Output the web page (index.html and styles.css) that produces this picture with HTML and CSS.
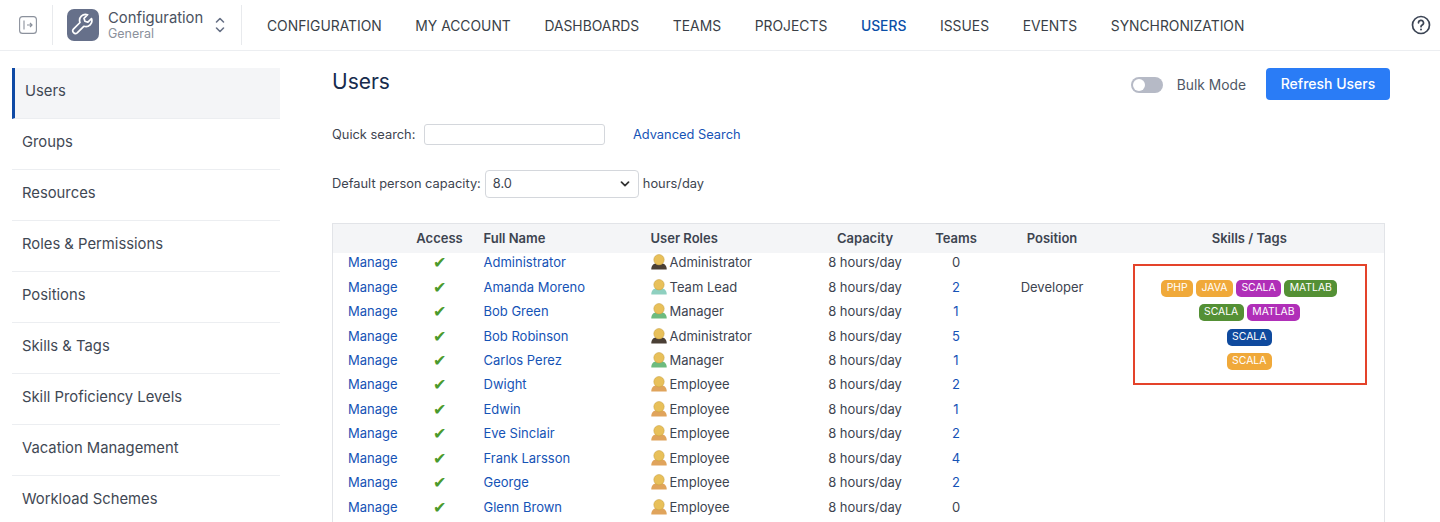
FILE: index.html
```html
<!DOCTYPE html>
<html lang="en">
<head>
<meta charset="utf-8">
<title>Users</title>
<link rel="stylesheet" href="styles.css">
</head>
<body>
<svg class="defs" width="0" height="0" aria-hidden="true">
  <symbol id="user" viewBox="0 0 16 16">
    <path d="M.3 15.600c0-1 0-2.200.5-3.200.8-1.700 2.500-2.800 3.700-2.800h7c1.200 0 2.900 1.100 3.700 2.800.5 1 .5 2.200.5 3.200z" fill="currentColor"/>
    <circle cx="8" cy="5.700" r="5.200" fill="#e8c05a" stroke="#c49c3c" stroke-width=".5"/>
  </symbol>
</svg>
<header class="topbar">
  <div class="tb-toggle">
    <svg width="18" height="18" viewBox="0 0 18 18" fill="none" stroke="#8b919c" stroke-width="1.1"><rect x=".6" y=".6" width="16.8" height="16.8" rx="3"/><path d="M5 4.500v9"/><path d="M8 9h5M11 7l2 2-2 2" stroke-width="1.2"/></svg>
  </div>
  <div class="tb-project">
    <span class="tile">
      <svg width="24" height="24" viewBox="0 0 24 24" fill="none" stroke="#fff" stroke-width="1.7" stroke-linejoin="round" stroke-linecap="round"><path d="M20.500 5.600l-3.600 3.600-3-.9-.9-3 3.600-3.600a6 6 0 0 0-7.600 7.800l-6.600 6.600a2.700 2.700 0 0 0 3.800 3.800l6.600-6.600a6 6 0 0 0 7.700-7.700z"/></svg>
    </span>
    <span class="proj-text">
      <span class="proj-name">Configuration</span>
      <span class="proj-sub">General</span>
    </span>
    <svg class="updown" width="10" height="18" viewBox="0 0 10 18" fill="none" stroke="#667085" stroke-width="1.6" stroke-linecap="round" stroke-linejoin="round"><path d="M1.500 6L5 2.500 8.500 6M1.500 12L5 15.500 8.500 12"/></svg>
  </div>
  <nav class="nav">
    <a>CONFIGURATION</a><a>MY ACCOUNT</a><a>DASHBOARDS</a><a>TEAMS</a><a>PROJECTS</a><a class="on">USERS</a><a>ISSUES</a><a>EVENTS</a><a>SYNCHRONIZATION</a>
  </nav>
  <svg class="help" width="20" height="20" viewBox="0 0 20 20" fill="none" stroke="#3b4454" stroke-width="1.7" stroke-linecap="round"><circle cx="10" cy="10" r="8.500"/><path d="M7.500 7.800a2.500 2.500 0 1 1 3.700 2.200c-.8.500-1.200.9-1.200 1.700"/><path d="M10 14.400v.1" stroke-width="2"/></svg>
</header>
<div class="page">
  <aside class="side">
    <a class="on">Users</a><a>Groups</a><a>Resources</a><a>Roles &amp; Permissions</a><a>Positions</a><a>Skills &amp; Tags</a><a>Skill Proficiency Levels</a><a>Vacation Management</a><a>Workload Schemes</a>
  </aside>
  <main class="content">
    <div class="title-row">
      <h1>Users</h1>
      <div class="actions">
        <span class="switch"><i></i></span>
        <span class="bulk">Bulk Mode</span>
        <button class="refresh">Refresh Users</button>
      </div>
    </div>
    <div class="search-row">
      <label>Quick search:</label>
      <input class="qs" type="text">
      <a class="link">Advanced Search</a>
    </div>
    <div class="cap-row">
      <label>Default person capacity:</label>
      <span class="select">8.0<svg width="10" height="6" viewBox="0 0 10 6" fill="none" stroke="#333" stroke-width="1.700" stroke-linecap="round" stroke-linejoin="round"><path d="M1.500 1.200L5 4.700l3.500-3.500"/></svg></span>
      <span>hours/day</span>
    </div>
    <div class="table-wrap">
      <table>
        <colgroup><col class="c1"><col class="c2"><col class="c3"><col class="c4"><col class="c5"><col class="c6"><col class="c7"><col class="c8"></colgroup>
        <thead><tr><th></th><th class="ctr">Access</th><th>Full Name</th><th>User Roles</th><th class="ctr">Capacity</th><th class="ctr">Teams</th><th class="ctr">Position</th><th class="ctr last">Skills / Tags</th></tr></thead>
        <tbody>
          <tr><td><a class="link">Manage</a></td><td class="ok">✔</td><td><a class="link">Administrator</a></td><td><svg class="ui r-admin"><use href="#user"/></svg>Administrator</td><td class="ctr">8 hours/day</td><td class="ctr">0</td><td class="ctr"></td><td class="ctr last"></td></tr>
          <tr><td><a class="link">Manage</a></td><td class="ok">✔</td><td><a class="link">Amanda Moreno</a></td><td><svg class="ui r-lead"><use href="#user"/></svg>Team Lead</td><td class="ctr">8 hours/day</td><td class="ctr"><a class="link">2</a></td><td class="ctr">Developer</td><td class="ctr last"><span class="tag o">PHP</span><span class="tag o">JAVA</span><span class="tag p">SCALA</span><span class="tag g">MATLAB</span></td></tr>
          <tr><td><a class="link">Manage</a></td><td class="ok">✔</td><td><a class="link">Bob Green</a></td><td><svg class="ui r-mgr"><use href="#user"/></svg>Manager</td><td class="ctr">8 hours/day</td><td class="ctr"><a class="link">1</a></td><td class="ctr"></td><td class="ctr last"><span class="tag g">SCALA</span><span class="tag p">MATLAB</span></td></tr>
          <tr><td><a class="link">Manage</a></td><td class="ok">✔</td><td><a class="link">Bob Robinson</a></td><td><svg class="ui r-admin"><use href="#user"/></svg>Administrator</td><td class="ctr">8 hours/day</td><td class="ctr"><a class="link">5</a></td><td class="ctr"></td><td class="ctr last"><span class="tag b">SCALA</span></td></tr>
          <tr><td><a class="link">Manage</a></td><td class="ok">✔</td><td><a class="link">Carlos Perez</a></td><td><svg class="ui r-mgr"><use href="#user"/></svg>Manager</td><td class="ctr">8 hours/day</td><td class="ctr"><a class="link">1</a></td><td class="ctr"></td><td class="ctr last"><span class="tag o">SCALA</span></td></tr>
          <tr><td><a class="link">Manage</a></td><td class="ok">✔</td><td><a class="link">Dwight</a></td><td><svg class="ui r-emp"><use href="#user"/></svg>Employee</td><td class="ctr">8 hours/day</td><td class="ctr"><a class="link">2</a></td><td class="ctr"></td><td class="ctr last"></td></tr>
          <tr><td><a class="link">Manage</a></td><td class="ok">✔</td><td><a class="link">Edwin</a></td><td><svg class="ui r-emp"><use href="#user"/></svg>Employee</td><td class="ctr">8 hours/day</td><td class="ctr"><a class="link">1</a></td><td class="ctr"></td><td class="ctr last"></td></tr>
          <tr><td><a class="link">Manage</a></td><td class="ok">✔</td><td><a class="link">Eve Sinclair</a></td><td><svg class="ui r-emp"><use href="#user"/></svg>Employee</td><td class="ctr">8 hours/day</td><td class="ctr"><a class="link">2</a></td><td class="ctr"></td><td class="ctr last"></td></tr>
          <tr><td><a class="link">Manage</a></td><td class="ok">✔</td><td><a class="link">Frank Larsson</a></td><td><svg class="ui r-emp"><use href="#user"/></svg>Employee</td><td class="ctr">8 hours/day</td><td class="ctr"><a class="link">4</a></td><td class="ctr"></td><td class="ctr last"></td></tr>
          <tr><td><a class="link">Manage</a></td><td class="ok">✔</td><td><a class="link">George</a></td><td><svg class="ui r-emp"><use href="#user"/></svg>Employee</td><td class="ctr">8 hours/day</td><td class="ctr"><a class="link">2</a></td><td class="ctr"></td><td class="ctr last"></td></tr>
          <tr><td><a class="link">Manage</a></td><td class="ok">✔</td><td><a class="link">Glenn Brown</a></td><td><svg class="ui r-emp"><use href="#user"/></svg>Employee</td><td class="ctr">8 hours/day</td><td class="ctr">0</td><td class="ctr"></td><td class="ctr last"></td></tr>
        </tbody>
      </table>
      <div class="highlight"></div>
    </div>
  </main>
</div>
</body>
</html>
```
FILE: styles.css
```css
* { box-sizing: border-box; }
html, body { margin: 0; height: 522px; overflow: hidden; background: #fff; }
body { font-family: Inter, "Liberation Sans", sans-serif; color: #3d4450; font-size: 13px; }
.defs { position: absolute; }
.topbar { height: 51px; display: flex; align-items: center; border-bottom: 1px solid #eceef1; }
.tb-toggle { width: 53px; height: 40px; margin-top: -1px; border-right: 1px solid #e8eaed; display: flex; align-items: center; padding-left: 19px; }
.tb-project { width: 189px; height: 40px; margin-top: -1px; border-right: 1px solid #e8eaed; display: flex; align-items: center; padding-left: 14px; }
.tile { width: 32px; height: 32px; border-radius: 7px; background: #66708a; display: flex; align-items: center; justify-content: center; }
.proj-text { display: flex; flex-direction: column; margin-left: 9px; width: 107px; }
.proj-name { font-size: 14.800px; line-height: 17px; margin-top: 1px; color: #4a5261; }
.proj-sub { font-size: 12.500px; line-height: 15px; margin-top: -1px; color: #8b919c; }
.nav { display: flex; gap: 33.600px; margin: 1px 0 0 25px; flex: 1; }
.nav a { font-size: 13.860px; color: #3a3f47; }
.nav a.on { color: #0b4fa8; font-weight: 500; }
.help { margin-right: 9px; }
.page { display: flex; }
.side { width: 268px; margin: 17px 0 0 12px; flex: none; }
.side a { display: flex; align-items: center; height: 51px; padding: 0 0 5px 10px; font-size: 14.800px; color: #3f4854; border-bottom: 1px solid #eceef1; }
.side a.on { background: #f4f5f7; border-left: 3px solid #0f4aa5; padding-left: 10px; }
.content { margin-left: 52px; width: 1058px; padding-top: 17px; }
.title-row { display: flex; justify-content: space-between; height: 32px; }
h1 { margin: 0; font-size: 21px; font-weight: 400; line-height: 27px; color: #172b4d; }
.actions { display: flex; align-items: center; }
.switch { width: 32px; height: 16px; border-radius: 8px; background: #b6bac6; display: flex; align-items: center; padding-left: 2px; margin-top: 2px; }
.switch i { width: 12px; height: 12px; border-radius: 50%; background: #fff; }
.bulk { margin: 2px 20px 0 14px; font-size: 13.800px; color: #505866; }
.refresh { width: 124px; height: 32px; padding: 0 0 2px; border: 0; border-radius: 4px; background: #2a7cf6; color: #fff; font: 500 14px Inter, sans-serif; }
.search-row { display: flex; align-items: center; margin-top: 24px; height: 21px; font-size: 12.850px; }
.search-row label { margin: 0 9px 1px 0; }
.qs { width: 181px; height: 21px; border: 1px solid #d4d7dc; border-radius: 3px; background: #fff; }
.link { color: #1553b6; }
.search-row .link { margin: 0 0 1px 27.500px; }
.cap-row { display: flex; align-items: center; gap: 4px; margin-top: 25px; height: 28px; font-size: 12.850px; }
.cap-row label, .cap-row > span:last-child { margin-bottom: 2px; }
.select { width: 154px; height: 28px; border: 1px solid #d4d7dc; border-radius: 4px; display: flex; align-items: center; justify-content: space-between; padding: 0 8px 1px 7px; }
.table-wrap { position: relative; margin-top: 25px; width: 1053px; }
table { width: 100%; border-collapse: collapse; table-layout: fixed; border-left: 1px solid #e2e4e8; border-right: 1px solid #e2e4e8; border-top: 1px solid #e2e4e8; }
.c1 { width: 63px; } .c2 { width: 88px; } .c3 { width: 167px; } .c4 { width: 152px; } .c5 { width: 125px; } .c6 { width: 57px; } .c7 { width: 135px; }
th { height: 29.700px; background: #f4f5f7; text-align: left; font-weight: 600; font-size: 13px; color: #3d4450; padding: 0 0 2px; }
td { height: 24.450px; padding: 0; line-height: 18px; vertical-align: top; white-space: nowrap; }
td:first-child { padding-left: 15px; }
.ctr { text-align: center; }
.last { padding-right: 5px; }
.ok { text-align: center; color: #4b9a2c; font-size: 16px; }
.ui { width: 16px; height: 16px; margin-right: 3px; vertical-align: -3px; }
.r-admin { color: #4a3f35; } .r-lead { color: #8fd0c0; } .r-mgr { color: #6dbb7f; } .r-emp { color: #e0a45c; }
.tag { display: inline-block; height: 17px; line-height: 16px; padding: 0 5.300px; border-radius: 5px; color: #fff; font-size: 10.400px; margin: 2px 1.700px 0; vertical-align: top; }
.o { background: #f0a93a; } .p { background: #b02fb8; } .g { background: #549035; } .b { background: #0f4a9e; }
.highlight { position: absolute; left: 801px; top: 41px; width: 234px; height: 121px; border: 2.500px solid #e4432a; pointer-events: none; }
```
